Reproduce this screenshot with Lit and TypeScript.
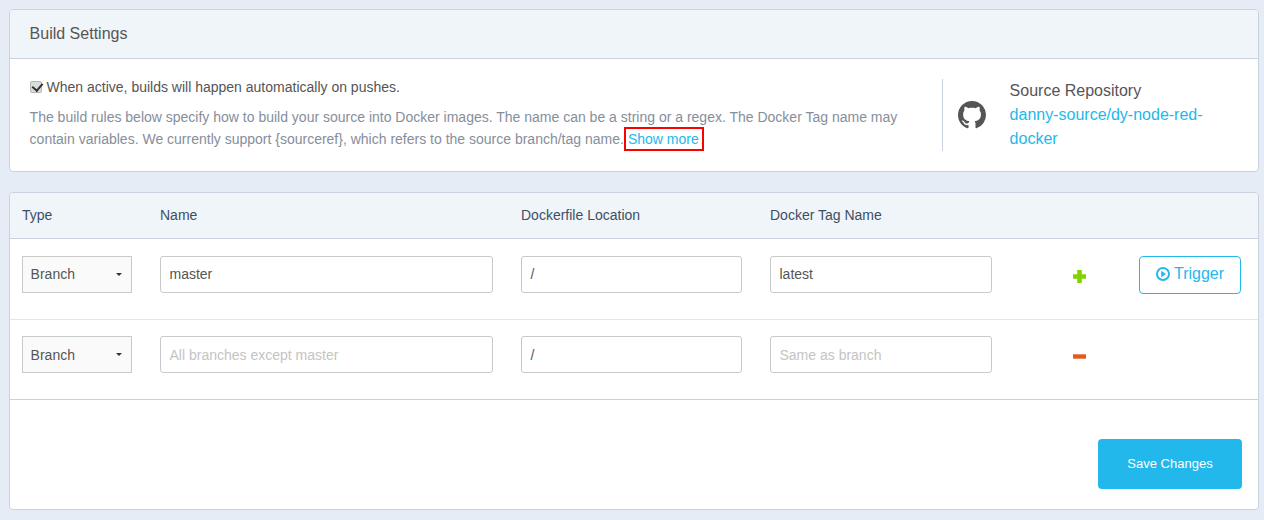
import { LitElement, html, css } from "lit";
import { customElement } from "lit/decorators.js";

@customElement("app-root")
export class AppRoot extends LitElement {
  static styles = css`
    :host { display: block; width: 1264px; height: 520px; box-sizing: border-box; padding: 9px 5px 0 9px; background: #e6ecf5; font: 14px/24px "Liberation Sans", Arial, sans-serif; color: #555; overflow: hidden; }
    * { box-sizing: border-box; }
    a { color: #22b8eb; text-decoration: none; }
    .panel { background: #fff; border: 1px solid #c8d2e0; border-radius: 4px; overflow: hidden; }
    .head { height: 49px; padding: 0 19.6px; display: flex; align-items: center; background: #f0f5fa; border-bottom: 1px solid #c8d2e0; font-size: 16px; color: #555; }
    .settings { height: 112px; display: flex; padding: 18px 20px 0 19.6px; }
    .info { width: 912.4px; flex: none; }
    .check { display: flex; align-items: center; height: 20px; font-size: 14px; color: #555; }
    .check input { appearance: none; position: relative; width: 12px; height: 12px; margin: 0 4.6px 0 0.4px; background: #dcdcdc; border: 1px solid #b5b5b5; border-radius: 2px; }
    .check input::after { content: ""; position: absolute; left: 3px; top: -1px; width: 5px; height: 8px; border: solid #333; border-width: 0 2.5px 2.5px 0; transform: rotate(40deg); }
    .desc { margin: 9px 0 0; line-height: 22px; color: #868e9c; }
    .more { border: 2px solid #f00; padding: 2px 3px 2px 2px; }
    .repo { flex: 1; height: 72px; margin-top: 2px; border-left: 1px solid #c8d2e0; display: flex; padding-left: 15px; }
    .gh { width: 28px; height: 28px; margin: 22px 23.6px 0 0; fill: #555; flex: none; }
    .repo-text { font-size: 16px; width: 210px; }
    .cols { display: grid; grid-template-columns: 110px 333px 221px 222px 1fr; column-gap: 28px; padding-left: 12px; }
    .thead { height: 46px; padding-bottom: 1px; align-items: center; background: #f0f5fa; border-bottom: 1px solid #c8d2e0; color: #3f4f63; }
    .row { height: 81px; padding-top: 17px; align-items: start; border-bottom: 1px solid #e3e6ea; }
    .row.last { height: 80px; padding-top: 16px; border-bottom-color: #c8d2e0; }
    .select { height: 37px; border: 1px solid #c9c9c9; background: #fafafa; display: flex; align-items: center; justify-content: space-between; padding: 0 9px 0 7.6px; color: #555; }
    .caret { width: 0; height: 0; border-left: 3px solid transparent; border-right: 3px solid transparent; border-top: 3px solid #333; }
    .input { height: 37px; border: 1px solid #c9c9c9; border-radius: 3px; display: flex; align-items: center; padding: 0 8.5px; color: #555; }
    .first { padding-bottom: 1px; }
    .ph { color: #c4c4c4; }
    .actions { display: flex; height: 38px; align-items: center; }
    .sign { width: 13px; height: 13px; margin: 3px 0 0 53px; flex: none; display: block; }
    .trigger { margin-left: 53px; width: 102px; height: 38px; border: 1px solid #22b8eb; border-radius: 4px; background: #fff; color: #22b8eb; font: 16px "Liberation Sans", Arial, sans-serif; display: flex; align-items: center; justify-content: center; gap: 4px; padding: 0 0 2px; }
    .trigger svg { width: 14px; height: 14px; display: block; }
    .foot { height: 109px; display: flex; justify-content: flex-end; padding: 39px 16px 0 0; }
    .save { width: 144px; height: 50px; border: 0; border-radius: 4px; background: #22b8eb; color: #fff; font: 13px "Liberation Sans", Arial, sans-serif; padding: 0 0 2px; }
    .gap { height: 20px; }
  `;

  private row(name: string, namePh: boolean, tag: string, tagPh: boolean, add: boolean, last: boolean) {
    const first = last ? "" : "first";
    return html`
      <div class="cols row ${last ? "last" : ""}">
        <div class="select ${first}"><span>Branch</span><span class="caret"></span></div>
        <div class="input ${first} ${namePh ? "ph" : ""}">${name}</div>
        <div class="input ${first}">/</div>
        <div class="input ${first} ${tagPh ? "ph" : ""}">${tag}</div>
        <div class="actions">
          ${add
            ? html`<svg class="sign" viewBox="0 0 13 13"><path d="M4.2 0h4.6v4.3H13v4.4H8.8V13H4.2V8.7H0V4.3h4.2z" fill="#82d400"/></svg>
                <button class="trigger"><svg viewBox="0 0 14 14"><circle cx="7" cy="7" r="6" fill="none" stroke="#22b8eb" stroke-width="2"/><path d="M5.2 3.8 10 7l-4.8 3.2z" fill="#22b8eb"/></svg>Trigger</button>`
            : html`<svg class="sign" viewBox="0 0 13 13"><rect x="0" y="4.3" width="13" height="4.4" fill="#e8571e"/></svg>`}
        </div>
      </div>`;
  }

  render() {
    return html`
      <div class="panel">
        <div class="head">Build Settings</div>
        <div class="settings">
          <div class="info">
            <label class="check"><input type="checkbox" checked />When active, builds will happen automatically on pushes.</label>
            <p class="desc">The build rules below specify how to build your source into Docker images. The name can be a string or a regex. The Docker Tag name may contain variables. We currently support {sourceref}, which refers to the source branch/tag name.<a class="more" href="#">Show more</a></p>
          </div>
          <div class="repo">
            <svg class="gh" viewBox="0 0 16 16"><path d="M8 0C3.58 0 0 3.58 0 8c0 3.54 2.29 6.53 5.47 7.59.4.07.55-.17.55-.38 0-.19-.01-.82-.01-1.49-2.01.37-2.53-.49-2.69-.94-.09-.23-.48-.94-.82-1.13-.28-.15-.68-.52-.01-.53.63-.01 1.08.58 1.23.82.72 1.21 1.87.87 2.33.66.07-.52.28-.87.51-1.07-1.78-.2-3.64-.89-3.64-3.95 0-.87.31-1.59.82-2.15-.08-.2-.36-1.02.08-2.12 0 0 .67-.21 2.2.82.64-.18 1.32-.27 2-.27s1.36.09 2 .27c1.53-1.04 2.2-.82 2.2-.82.44 1.1.16 1.92.08 2.12.51.56.82 1.27.82 2.15 0 3.07-1.87 3.75-3.65 3.95.29.25.54.73.54 1.48 0 1.07-.01 1.93-.01 2.2 0 .21.15.46.55.38A8.01 8.01 0 0 0 16 8c0-4.42-3.58-8-8-8z"/></svg>
            <div class="repo-text">Source Repository<br /><a href="#">danny-source/dy-node-red-docker</a></div>
          </div>
        </div>
      </div>
      <div class="gap"></div>
      <div class="panel">
        <div class="cols thead"><span>Type</span><span>Name</span><span>Dockerfile Location</span><span>Docker Tag Name</span><span></span></div>
        ${this.row("master", false, "latest", false, true, false)}
        ${this.row("All branches except master", true, "Same as branch", true, false, true)}
        <div class="foot"><button class="save">Save Changes</button></div>
      </div>
    `;
  }
}
